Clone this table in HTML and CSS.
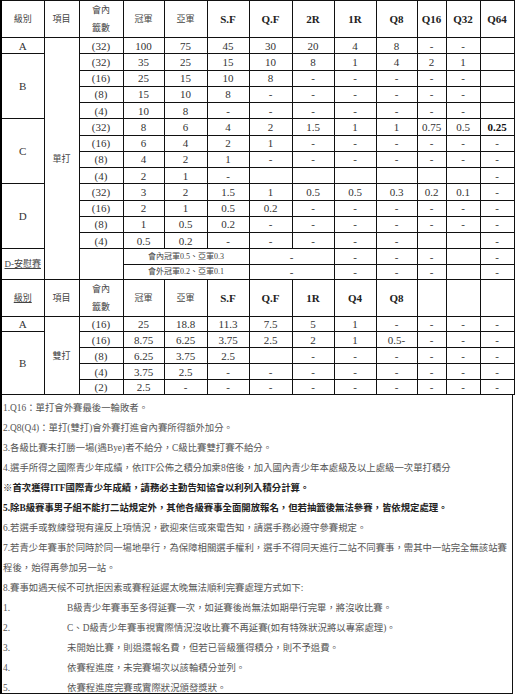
FILE: index.html
```html
<!DOCTYPE html>
<html lang="zh-Hant">
<head>
<meta charset="utf-8">
<title>積分表</title>
<link rel="stylesheet" href="styles.css">
</head>
<body>
<div class="sheet">
<table class="grid">
<colgroup>
<col class="w43"><col class="w35"><col class="w44"><col class="w41"><col class="w43"><col class="w42"><col class="w43"><col class="w42"><col class="w42"><col class="w41"><col class="w29"><col class="w34"><col class="w34">
</colgroup>
<tr class="head">
<th class="zh">級別</th><th class="zh">項目</th><th class="zh">會內<br>籤數</th><th class="zh">冠軍</th><th class="zh">亞軍</th><th>S.F</th><th>Q.F</th><th>2R</th><th>1R</th><th>Q8</th><th>Q16</th><th>Q32</th><th>Q64</th>
</tr>
<tr class="r"><td>A</td><td rowspan="15" class="zh">單打</td><td>(32)</td><td>100</td><td>75</td><td>45</td><td>30</td><td>20</td><td>4</td><td>8</td><td>-</td><td>-</td><td></td></tr>
<tr class="r"><td rowspan="4">B</td><td>(32)</td><td>35</td><td>25</td><td>15</td><td>10</td><td>8</td><td>1</td><td>4</td><td>2</td><td>1</td><td></td></tr>
<tr class="r"><td>(16)</td><td>25</td><td>15</td><td>10</td><td>8</td><td>-</td><td>-</td><td>-</td><td>-</td><td>-</td><td></td></tr>
<tr class="r"><td>(8)</td><td>15</td><td>10</td><td>8</td><td>-</td><td>-</td><td>-</td><td>-</td><td>-</td><td>-</td><td></td></tr>
<tr class="r"><td>(4)</td><td>10</td><td>8</td><td>-</td><td>-</td><td>-</td><td>-</td><td>-</td><td>-</td><td>-</td><td></td></tr>
<tr class="r"><td rowspan="4">C</td><td>(32)</td><td>8</td><td>6</td><td>4</td><td>2</td><td>1.5</td><td>1</td><td>1</td><td>0.75</td><td>0.5</td><td class="b">0.25</td></tr>
<tr class="r"><td>(16)</td><td>6</td><td>4</td><td>2</td><td>1</td><td>-</td><td>-</td><td>-</td><td>-</td><td>-</td><td>-</td></tr>
<tr class="r"><td>(8)</td><td>4</td><td>2</td><td>1</td><td>-</td><td>-</td><td>-</td><td>-</td><td>-</td><td>-</td><td>-</td></tr>
<tr class="r"><td>(4)</td><td>2</td><td>1</td><td>-</td><td></td><td></td><td></td><td></td><td></td><td></td><td>-</td></tr>
<tr class="r"><td rowspan="4">D</td><td>(32)</td><td>3</td><td>2</td><td>1.5</td><td>1</td><td>0.5</td><td>0.5</td><td>0.3</td><td>0.2</td><td>0.1</td><td>-</td></tr>
<tr class="r"><td>(16)</td><td>2</td><td>1</td><td>0.5</td><td>0.2</td><td>-</td><td>-</td><td>-</td><td>-</td><td>-</td><td>-</td></tr>
<tr class="r"><td>(8)</td><td>1</td><td>0.5</td><td>0.2</td><td>-</td><td>-</td><td>-</td><td>-</td><td>-</td><td>-</td><td>-</td></tr>
<tr class="r"><td>(4)</td><td>0.5</td><td>0.2</td><td>-</td><td>-</td><td>-</td><td>-</td><td>-</td><td></td><td></td><td>-</td></tr>
<tr class="x1"><td rowspan="2" class="zh u">D-安慰賽</td><td rowspan="2"></td><td colspan="3" class="zh small">會內冠軍0.5、亞軍0.3</td><td colspan="2">-</td><td>-</td><td>-</td><td>-</td><td></td><td>-</td></tr>
<tr class="x2"><td colspan="3" class="zh small">會外冠軍0.2、亞軍0.1</td><td colspan="2">-</td><td>-</td><td>-</td><td>-</td><td></td><td>-</td></tr>
<tr class="head2">
<th class="zh u">級別</th><th class="zh">項目</th><th class="zh">會內<br>籤數</th><th class="zh">冠軍</th><th class="zh">亞軍</th><th>S.F</th><th>Q.F</th><th>1R</th><th>Q4</th><th>Q8</th><th></th><th></th><th></th>
</tr>
<tr class="s1"><td>A</td><td rowspan="5" class="zh">雙打</td><td>(16)</td><td>25</td><td>18.8</td><td>11.3</td><td>7.5</td><td>5</td><td>1</td><td>-</td><td>-</td><td>-</td><td>-</td></tr>
<tr class="s2"><td rowspan="4">B</td><td>(16)</td><td>8.75</td><td>6.25</td><td>3.75</td><td>2.5</td><td>2</td><td>1</td><td>0.5-</td><td>-</td><td>-</td><td>-</td></tr>
<tr class="s2"><td>(8)</td><td>6.25</td><td>3.75</td><td>2.5</td><td></td><td>-</td><td>-</td><td>-</td><td>-</td><td>-</td><td>-</td></tr>
<tr class="s2"><td>(4)</td><td>3.75</td><td>2.5</td><td>-</td><td>-</td><td>-</td><td>-</td><td>-</td><td>-</td><td>-</td><td>-</td></tr>
<tr class="s1"><td>(2)</td><td>2.5</td><td>-</td><td>-</td><td>-</td><td>-</td><td>-</td><td>-</td><td>-</td><td>-</td><td>-</td></tr>
</table>
<div class="notes">
<p>1.Q16：單打會外賽最後一輪敗者。</p>
<p>2.Q8(Q4)：單打(雙打)會外賽打進會內賽所得額外加分。</p>
<p>3.各級比賽未打勝一場(遇Bye)者不給分，C級比賽雙打賽不給分。</p>
<p>4.選手所得之國際青少年成績，依ITF公佈之積分加乘8倍後，加入國內青少年本處級及以上處級一次單打積分</p>
<p class="strong">※首次獲得ITF國際青少年成績，請務必主動告知協會以利列入積分計算。</p>
<p class="strong">5.除B級賽事男子組不能打二站規定外，其他各級賽事全面開放報名，但若抽籤後無法參賽，皆依規定處理。</p>
<p>6.若選手或教練發現有違反上項情況，歡迎來信或來電告知，請選手務必遵守參賽規定。</p>
<p>7.若青少年賽事於同時於同一場地舉行，為保障相關選手權利，選手不得同天進行二站不同賽事，需其中一站完全無該站賽<br>程後，始得再參加另一站。</p>
<p>8.賽事如遇天候不可抗拒因素或賽程延遲太晚無法順利完賽處理方式如下:</p>
<div class="sub"><span>1.</span><span>B級青少年賽事至多得延賽一次，如延賽後尚無法如期舉行完畢，將沒收比賽。</span></div>
<div class="sub"><span>2.</span><span>C、D級青少年賽事視實際情況沒收比賽不再延賽(如有特殊狀況將以專案處理)。</span></div>
<div class="sub"><span>3.</span><span>未開始比賽，則退還報名費，但若已晉級獲得積分，則不予退費。</span></div>
<div class="sub"><span>4.</span><span>依賽程進度，未完賽場次以該輪積分並列。</span></div>
<div class="sub"><span>5.</span><span>依賽程進度完賽或實際狀況頒發獎狀。</span></div>
</div>
</div>
</body>
</html>
```
FILE: styles.css
```css
html, body {
  margin: 0;
  padding: 0;
  background: #fff;
}
body {
  font-family: "Liberation Serif", "Noto Sans CJK TC", serif;
  color: #333;
}
.sheet {
  width: 513px;
}
.grid {
  border-collapse: collapse;
  table-layout: fixed;
  width: 513px;
  border-left: 2px solid #000;
}
.w43 { width: 43px; }
.w35 { width: 35px; }
.w44 { width: 44px; }
.w41 { width: 41px; }
.w42 { width: 42px; }
.w29 { width: 29px; }
.w34 { width: 34px; }
.grid td, .grid th {
  border: 1px solid #111;
  padding: 0;
  text-align: center;
  vertical-align: middle;
  font-size: 11px;
  line-height: 12px;
  white-space: nowrap;
  overflow: hidden;
  font-weight: normal;
}
.grid th {
  font-weight: bold;
  color: #222;
}
.grid th.zh, .grid td.zh {
  font-weight: normal;
  font-size: 9px;
  color: #444;
}
.grid th.zh {
  line-height: 18px;
}
.grid td.small {
  font-size: 8px;
}
.grid td.b {
  font-weight: bold;
  color: #111;
}
.u {
  text-decoration: underline;
}
.head { height: 36px; }
.r { height: 16.25px; }
.x1 { height: 16px; }
.x2 { height: 15px; }
.head2 { height: 37px; }
.s1 { height: 15px; }
.s2 { height: 16px; }
.notes {
  box-sizing: border-box;
  height: 299px;
  border: 1px solid #111;
  border-left: 2px solid #000;
  border-top: none;
  padding: 3px 3px 0 1px;
  font-size: 9.4px;
  line-height: 20px;
  color: #555;
}
.notes p {
  margin: 0;
}
.notes .strong {
  font-weight: bold;
  color: #222;
}
.sub {
  display: grid;
  grid-template-columns: 64px 1fr;
}
```
